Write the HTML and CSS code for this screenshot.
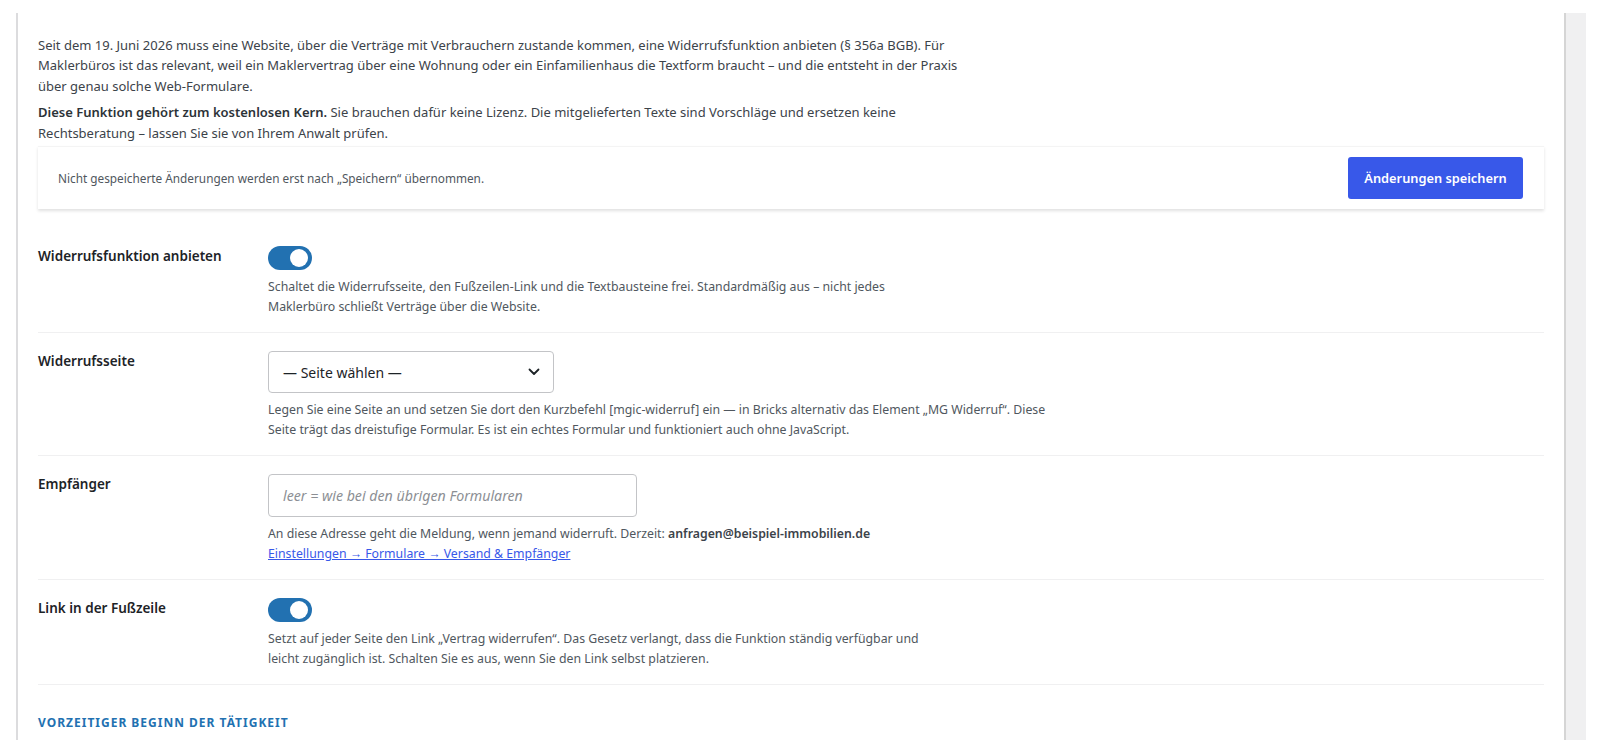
FILE: index.html
```html
<!DOCTYPE html>
<html lang="de">
<head>
<meta charset="utf-8">
<title>Widerruf</title>
<link rel="stylesheet" href="styles.css">
</head>
<body>
<div class="frame">
  <div class="panel">
    <p class="intro">Seit dem 19. Juni 2026 muss eine Website, über die Verträge mit Verbrauchern zustande kommen, eine Widerrufsfunktion anbieten (§ 356a BGB). Für<br>Maklerbüros ist das relevant, weil ein Maklervertrag über eine Wohnung oder ein Einfamilienhaus die Textform braucht – und die entsteht in der Praxis<br>über genau solche Web-Formulare.</p>
    <p class="intro"><strong>Diese Funktion gehört zum kostenlosen Kern.</strong> Sie brauchen dafür keine Lizenz. Die mitgelieferten Texte sind Vorschläge und ersetzen keine<br>Rechtsberatung – lassen Sie sie von Ihrem Anwalt prüfen.</p>

    <div class="savebar">
      <span class="savebar-text">Nicht gespeicherte Änderungen werden erst nach „Speichern“ übernommen.</span>
      <button class="btn-primary" type="button">Änderungen speichern</button>
    </div>

    <div class="rows">
      <div class="row">
        <div class="row-label">Widerrufsfunktion anbieten</div>
        <div class="row-field">
          <span class="toggle"><span class="knob"></span></span>
          <p class="desc">Schaltet die Widerrufsseite, den Fußzeilen-Link und die Textbausteine frei. Standardmäßig aus – nicht jedes<br>Maklerbüro schließt Verträge über die Website.</p>
        </div>
      </div>
      <div class="row">
        <div class="row-label">Widerrufsseite</div>
        <div class="row-field">
          <div class="select">
            <span>— Seite wählen —</span>
            <svg class="chev" width="12" height="8" viewBox="0 0 12 8"><path d="M1.5 1.5 6 6l4.5-4.5" fill="none" stroke="#1d2327" stroke-width="1.8" stroke-linecap="round" stroke-linejoin="round"/></svg>
          </div>
          <p class="desc">Legen Sie eine Seite an und setzen Sie dort den Kurzbefehl [mgic-widerruf] ein — in Bricks alternativ das Element „MG Widerruf“. Diese<br>Seite trägt das dreistufige Formular. Es ist ein echtes Formular und funktioniert auch ohne JavaScript.</p>
        </div>
      </div>
      <div class="row">
        <div class="row-label">Empfänger</div>
        <div class="row-field">
          <div class="input"><span class="placeholder">leer = wie bei den übrigen Formularen</span></div>
          <p class="desc">An diese Adresse geht die Meldung, wenn jemand widerruft. Derzeit: <strong class="mail">anfragen@beispiel-immobilien.de</strong><br><a class="link" href="#">Einstellungen → Formulare → Versand &amp; Empfänger</a></p>
        </div>
      </div>
      <div class="row">
        <div class="row-label">Link in der Fußzeile</div>
        <div class="row-field">
          <span class="toggle"><span class="knob"></span></span>
          <p class="desc">Setzt auf jeder Seite den Link „Vertrag widerrufen“. Das Gesetz verlangt, dass die Funktion ständig verfügbar und<br>leicht zugänglich ist. Schalten Sie es aus, wenn Sie den Link selbst platzieren.</p>
        </div>
      </div>
    </div>

    <h3 class="section-title">Vorzeitiger Beginn der Tätigkeit</h3>
  </div>
  <div class="track"></div>
</div>
</body>
</html>
```

FILE: styles.css
```css
html, body {
  margin: 0;
  padding: 0;
  background: #ffffff;
}
body {
  font-family: "Noto Sans", "Open Sans", sans-serif;
  color: #3c434a;
  overflow: hidden;
}
.frame {
  display: flex;
  margin: 13px 14px 0 16px;
  height: 727px;
  border-left: 2px solid #dcdcde;
}
.panel {
  flex: 1;
  padding: 22px 20px 0 20px;
  overflow: hidden;
}
.track {
  width: 20px;
  flex: none;
  background: #f0f0f1;
  border-left: 2px solid #d5d5d5;
}
.intro {
  margin: 0;
  font-size: 13px;
  line-height: 20.4px;
  white-space: nowrap;
}
.intro + .intro {
  margin-top: 6px;
}
.intro strong {
  color: #2c3338;
  font-weight: 600;
}
.savebar {
  display: flex;
  align-items: center;
  justify-content: space-between;
  margin-top: 3px;
  height: 62px;
  padding: 0 21px 0 20px;
  background: #fff;
  border-top: 1px solid #f4f4f4;
  box-shadow: 0 2px 3px rgba(0,0,0,0.12);
}
.savebar-text {
  font-size: 11.8px;
  color: #50575e;
}
.btn-primary {
  width: 175px;
  height: 42px;
  border: 0;
  border-radius: 3px;
  background: #3858e9;
  color: #fff;
  font-family: inherit;
  font-size: 12.8px;
  font-weight: 600;
}
.rows {
  margin-top: 19px;
}
.row {
  display: flex;
  padding: 18px 0 15px;
  border-bottom: 1px solid #f0f0f1;
}
.row-label {
  flex: none;
  width: 230px;
  font-size: 13.5px;
  line-height: 20px;
  font-weight: 600;
  color: #1d2327;
}
.row-field {
  flex: 1;
}
.toggle {
  display: block;
  position: relative;
  width: 44px;
  height: 24px;
  border-radius: 12px;
  background: #2271b1;
}
.knob {
  position: absolute;
  top: 3px;
  right: 4px;
  width: 18px;
  height: 18px;
  border-radius: 50%;
  background: #fff;
}
.desc {
  margin: 7px 0 0;
  font-size: 12.3px;
  line-height: 20px;
  color: #50575e;
  white-space: nowrap;
}
.mail {
  color: #3c434a;
  font-weight: 600;
}
.link {
  color: #3858e9;
  text-decoration: underline;
}
.select {
  box-sizing: border-box;
  display: flex;
  align-items: center;
  justify-content: space-between;
  width: 286px;
  height: 42px;
  padding: 0 13px 0 14px;
  border: 1px solid #c3c4c7;
  border-radius: 4px;
  font-size: 14px;
  color: #1d2327;
}
.input {
  box-sizing: border-box;
  display: flex;
  align-items: center;
  width: 369px;
  height: 43px;
  padding: 0 14px;
  border: 1px solid #c3c4c7;
  border-radius: 4px;
}
.placeholder {
  font-size: 14.2px;
  font-style: italic;
  color: #8c8f94;
}
.section-title {
  margin: 29px 0 0;
  font-size: 12px;
  font-weight: 700;
  letter-spacing: 1px;
  text-transform: uppercase;
  color: #2271b1;
}
```
